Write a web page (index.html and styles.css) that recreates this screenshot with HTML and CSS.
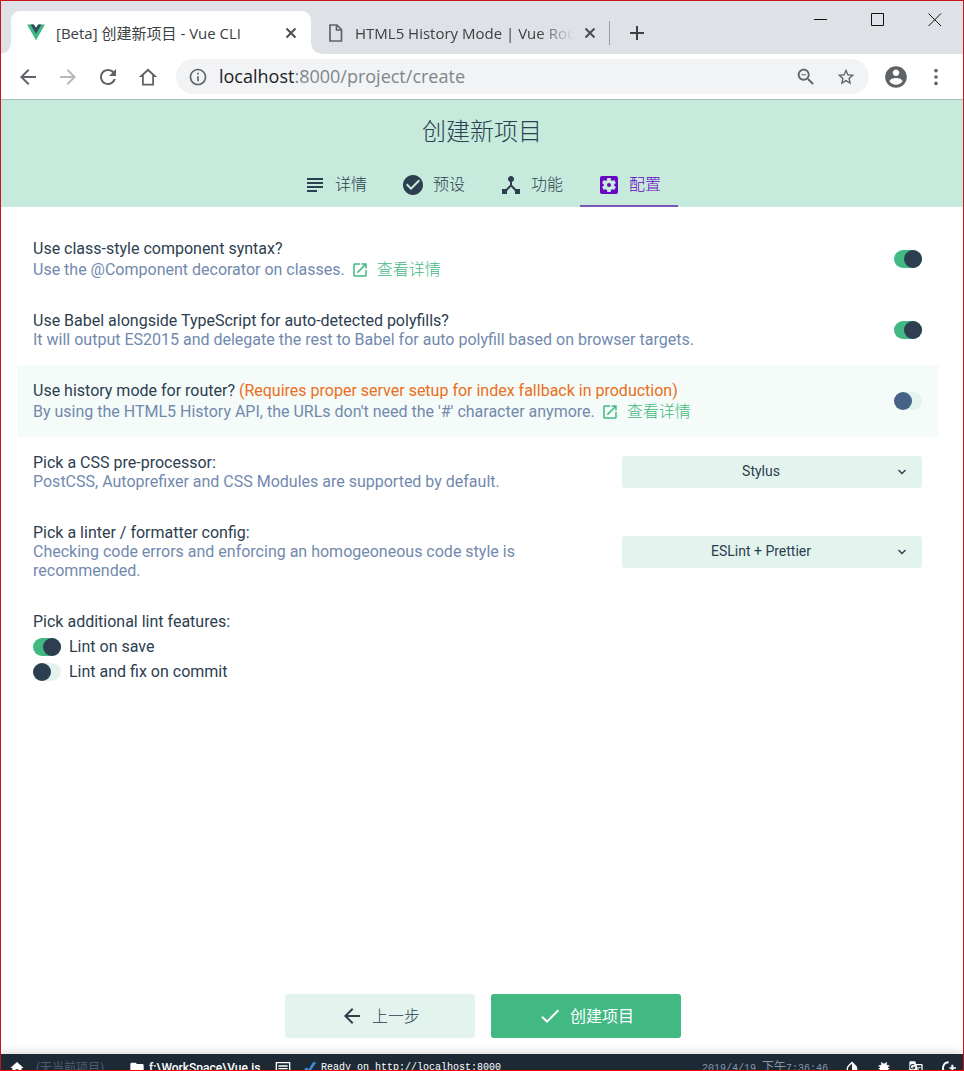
FILE: index.html
```html
<!DOCTYPE html>
<html lang="zh-CN">
<head>
<meta charset="utf-8">
<title>[Beta] 创建新项目 - Vue CLI</title>
<link rel="stylesheet" href="styles.css">
</head>
<body>
<div class="window">
  <div class="titlebar">
    <div class="tabs">
      <div class="tab tab-active">
        <svg class="favicon" viewBox="0 0 20 18"><path fill="#41b883" d="M0 0h7.600L10 4l2.400-4H20L10 17.500z"/><path fill="#35495e" d="M4 0h3.600L10 4l2.400-4H16l-6 10.400z"/></svg>
        <span class="tab-title">[Beta] 创建新项目 - Vue CLI</span>
        <button class="tab-close" type="button" aria-label="Close tab"><svg viewBox="0 0 12 12"><path d="M1.500 1.500l9 9m0-9l-9 9"/></svg></button>
      </div>
      <div class="tab">
        <svg class="favicon file" viewBox="0 0 18 20"><path d="M3 2h7l4.500 4.500V18H3zM9.500 2v5h5"/></svg>
        <span class="tab-title tab-title-fade">HTML5 History Mode | Vue Router</span>
        <button class="tab-close" type="button" aria-label="Close tab"><svg viewBox="0 0 12 12"><path d="M1.500 1.500l9 9m0-9l-9 9"/></svg></button>
      </div>
      <button class="new-tab" type="button" aria-label="New tab"><svg viewBox="0 0 16 16"><path d="M8 1v14M1 8h14"/></svg></button>
    </div>
    <div class="window-controls">
      <button type="button" aria-label="Minimize"><svg viewBox="0 0 14 14"><path d="M0 6.500h13"/></svg></button>
      <button type="button" aria-label="Maximize"><svg viewBox="0 0 14 14"><path d="M.5.5h12v12H.5z"/></svg></button>
      <button type="button" aria-label="Close"><svg viewBox="0 0 14 14"><path d="M.5.5l12.500 12.500m0-12.500l-12.500 12.500"/></svg></button>
    </div>
  </div>

  <div class="toolbar">
    <div class="nav-buttons">
      <button type="button" aria-label="Back"><svg viewBox="0 0 24 24"><path d="M20 11H7.830l5.590-5.590L12 4l-8 8 8 8 1.410-1.410L7.830 13H20v-2z"/></svg></button>
      <button type="button" class="muted" aria-label="Forward"><svg viewBox="0 0 24 24"><path d="M12 4l-1.410 1.410L16.170 11H4v2h12.170l-5.580 5.590L12 20l8-8z"/></svg></button>
      <button type="button" aria-label="Reload"><svg viewBox="0 0 24 24"><path d="M17.650 6.350C16.200 4.900 14.210 4 12 4c-4.420 0-7.990 3.580-7.990 8s3.570 8 7.990 8c3.730 0 6.840-2.550 7.730-6h-2.080c-.82 2.330-3.040 4-5.650 4-3.310 0-6-2.690-6-6s2.690-6 6-6c1.660 0 3.140.69 4.220 1.780L13 11h7V4l-2.350 2.350z"/></svg></button>
      <button type="button" aria-label="Home"><svg viewBox="0 0 24 24"><path d="M12 3.500L2.800 12H6v8.500h12V12h3.200zM12 6.200l4.200 3.900v8.600H7.800v-8.600z"/></svg></button>
    </div>
    <div class="address">
      <svg class="info" viewBox="0 0 24 24"><path d="M11 17h2v-6h-2v6zm1-15C6.480 2 2 6.480 2 12s4.480 10 10 10 10-4.480 10-10S17.520 2 12 2zm0 18c-4.410 0-8-3.590-8-8s3.590-8 8-8 8 3.590 8 8-3.590 8-8 8zM11 9h2V7h-2v2z"/></svg>
      <div class="url" role="textbox" aria-label="Address" contenteditable="true" spellcheck="false"><span class="url-host">localhost</span>:8000/project/create</div>
      <button type="button" aria-label="Zoom"><svg class="zoom" viewBox="0 0 24 24"><path d="M15.500 14h-.79l-.28-.27C15.410 12.590 16 11.110 16 9.500 16 5.910 13.090 3 9.500 3S3 5.910 3 9.500 5.910 16 9.500 16c1.610 0 3.090-.59 4.230-1.570l.27.28v.79l5 4.990L20.490 19l-4.990-5zm-6 0C7.010 14 5 11.990 5 9.500S7.010 5 9.500 5 14 7.010 14 9.500 11.990 14 9.500 14zM7 9h5v1H7z"/></svg></button>
      <button type="button" aria-label="Bookmark"><svg viewBox="0 0 24 24"><path d="M22 9.240l-7.190-.62L12 2 9.190 8.630 2 9.240l5.460 4.730L5.820 21 12 17.270 18.180 21l-1.630-7.030L22 9.240zM12 15.400l-3.760 2.270 1-4.280-3.320-2.880 4.380-.38L12 6.100l1.710 4.040 4.380.38-3.320 2.880 1 4.280L12 15.400z"/></svg></button>
    </div>
    <div class="profile-buttons">
      <button type="button" aria-label="Profile"><svg class="avatar" viewBox="0 0 24 24"><path d="M12 2C6.480 2 2 6.480 2 12s4.480 10 10 10 10-4.480 10-10S17.520 2 12 2zm0 3c1.660 0 3 1.340 3 3s-1.340 3-3 3-3-1.340-3-3 1.340-3 3-3zm0 14.200c-2.500 0-4.710-1.280-6-3.220.03-1.990 4-3.080 6-3.080 1.990 0 5.970 1.090 6 3.080-1.290 1.940-3.500 3.220-6 3.220z"/></svg></button>
      <button type="button" aria-label="Menu"><svg viewBox="0 0 24 24"><circle cx="12" cy="3.500" r="2.400"/><circle cx="12" cy="12" r="2.400"/><circle cx="12" cy="20.500" r="2.400"/></svg></button>
    </div>
  </div>

  <header class="page-header">
    <h1>创建新项目</h1>
    <nav class="steps">
      <a class="step" href="#details"><svg viewBox="0 0 24 24"><path d="M14 17H4v2h10v-2zm6-8H4v2h16V9zM4 15h16v-2H4v2zM4 5v2h16V5H4z"/></svg>详情</a>
      <a class="step" href="#presets"><svg viewBox="0 0 24 24"><path d="M12 2C6.480 2 2 6.480 2 12s4.480 10 10 10 10-4.480 10-10S17.520 2 12 2zm-2 15l-5-5 1.410-1.410L10 14.170l7.590-7.590L19 8l-9 9z"/></svg>预设</a>
      <a class="step" href="#features"><svg viewBox="0 0 24 24"><path d="M17 16l-4-4V8.820C14.160 8.400 15 7.300 15 6c0-1.660-1.340-3-3-3S9 4.340 9 6c0 1.300.84 2.400 2 2.820V12l-4 4H3v5h5v-3.050l4-4.200 4 4.200V21h5v-5h-4z"/></svg>功能</a>
      <a class="step step-active" href="#config" aria-current="step"><svg viewBox="0 0 24 24"><path d="M12 10c-1.100 0-2 .9-2 2s.9 2 2 2 2-.9 2-2-.9-2-2-2zm7-7H5c-1.110 0-2 .9-2 2v14c0 1.100.89 2 2 2h14c1.110 0 2-.9 2-2V5c0-1.100-.89-2-2-2zm-1.750 9c0 .23-.02.46-.05.68l1.480 1.160c.13.11.17.3.08.45l-1.400 2.420c-.09.15-.27.21-.43.15l-1.740-.7c-.36.28-.76.51-1.180.69l-.26 1.850c-.03.17-.18.3-.35.3h-2.800c-.17 0-.32-.13-.35-.29l-.26-1.850c-.43-.18-.82-.41-1.180-.69l-1.740.7c-.16.06-.34 0-.43-.15l-1.400-2.420c-.09-.15-.05-.34.08-.45l1.480-1.160c-.03-.23-.05-.46-.05-.69 0-.23.02-.46.05-.68l-1.480-1.160c-.13-.11-.17-.3-.08-.45l1.400-2.420c.09-.15.27-.21.43-.15l1.740.7c.36-.28.76-.51 1.180-.69l.26-1.850c.03-.17.18-.3.35-.3h2.800c.17 0 .32.13.35.29l.26 1.850c.43.18.82.41 1.180.69l1.740-.7c.16-.06.34 0 .43.15l1.400 2.420c.09.15.05.34-.08.45l-1.480 1.160c.03.23.05.46.05.69z"/></svg>配置</a>
    </nav>
  </header>

  <main class="config">
    <div class="row">
      <div class="row-text">
        <label for="class-style">Use class-style component syntax?</label>
        <div class="description has-link">Use the @Component decorator on classes.
          <a class="more" href="#class-style-info"><svg viewBox="0 0 24 24"><path d="M19 19H5V5h7V3H5c-1.110 0-2 .9-2 2v14c0 1.100.89 2 2 2h14c1.100 0 2-.9 2-2v-7h-2v7zM14 3v2h3.590l-9.830 9.830 1.410 1.410L19 6.410V10h2V3h-7z"/></svg>查看详情</a></div>
      </div>
      <input class="switch" id="class-style" type="checkbox" checked>
    </div>
    <div class="row">
      <div class="row-text">
        <label for="babel">Use Babel alongside TypeScript for auto-detected polyfills?</label>
        <div class="description">It will output ES2015 and delegate the rest to Babel for auto polyfill based on browser targets.</div>
      </div>
      <input class="switch" id="babel" type="checkbox" checked>
    </div>
    <div class="row row-hover">
      <div class="row-text">
        <label for="history">Use history mode for router? <span class="warning">(Requires proper server setup for index fallback in production)</span></label>
        <div class="description has-link">By using the HTML5 History API, the URLs don't need the '#' character anymore.
          <a class="more" href="#history-info"><svg viewBox="0 0 24 24"><path d="M19 19H5V5h7V3H5c-1.110 0-2 .9-2 2v14c0 1.100.89 2 2 2h14c1.100 0 2-.9 2-2v-7h-2v7zM14 3v2h3.590l-9.830 9.830 1.410 1.410L19 6.410V10h2V3h-7z"/></svg>查看详情</a></div>
      </div>
      <input class="switch" id="history" type="checkbox">
    </div>
    <div class="row">
      <div class="row-text">
        <label for="css">Pick a CSS pre-processor:</label>
        <div class="description">PostCSS, Autoprefixer and CSS Modules are supported by default.</div>
      </div>
      <div class="select-wrap">
        <select id="css"><option>Stylus</option></select>
        <svg viewBox="0 0 10 10"><path d="M1.500 3l3.500 3.500L8.500 3"/></svg>
      </div>
    </div>
    <div class="row">
      <div class="row-text">
        <label for="linter">Pick a linter / formatter config:</label>
        <div class="description">Checking code errors and enforcing an homogeoneous code style is recommended.</div>
      </div>
      <div class="select-wrap">
        <select id="linter"><option>ESLint + Prettier</option></select>
        <svg viewBox="0 0 10 10"><path d="M1.500 3l3.500 3.500L8.500 3"/></svg>
      </div>
    </div>
    <fieldset class="lint">
      <legend>Pick additional lint features:</legend>
      <label><input class="switch" type="checkbox" checked>Lint on save</label>
      <label><input class="switch" type="checkbox">Lint and fix on commit</label>
    </fieldset>
  </main>

  <div class="actions">
    <button class="action" type="button"><svg viewBox="0 0 24 24"><path d="M20 11H7.830l5.590-5.590L12 4l-8 8 8 8 1.410-1.410L7.830 13H20v-2z"/></svg>上一步</button>
    <button class="action action-primary" type="button"><svg viewBox="0 0 24 24"><path d="M9 16.200L4.800 12l-1.400 1.400L9 19 21 7l-1.400-1.400L9 16.200z"/></svg>创建项目</button>
  </div>

  <div class="status-clip">
    <footer class="status">
      <svg viewBox="0 0 24 24"><path d="M10 20v-6h4v6h5v-8h3L12 3 2 12h3v8z"/></svg>
      <span class="status-project">(无当前项目)</span>
      <svg viewBox="0 0 24 24"><path d="M10 4H4c-1.100 0-2 .9-2 2v12c0 1.100.9 2 2 2h16c1.100 0 2-.9 2-2V8c0-1.100-.9-2-2-2h-8l-2-2z"/></svg>
      <span class="status-path">f:\WorkSpace\Vue.js</span>
      <svg viewBox="0 0 24 24"><path d="M1 3h22v18H1zM3 5v14h18V5zM5 8h14v2H5zM5 12h14v2H5z" fill-rule="evenodd"/></svg>
      <svg class="status-check" viewBox="0 0 24 24"><path d="M17 2h6L10 21 2 14l4-3 4 3z"/></svg>
      <span class="status-log">Ready on http://localhost:8000</span>
      <span class="status-time">2019/4/19 <span class="meridiem">下午</span>7:36:46</span>
      <div class="status-tools">
        <svg viewBox="0 0 24 24"><path d="M17.660 7.930L12 2.270 6.340 7.930c-3.120 3.120-3.120 8.190 0 11.310a8 8 0 0 0 11.320 0c3.120-3.120 3.120-8.190 0-11.310zM12 19.590a6 6 0 0 1-4.240-10.240L12 5.100z"/></svg>
        <svg viewBox="0 0 24 24"><path d="M20 8h-2.810c-.45-.78-1.070-1.450-1.820-1.960L17 4.410 15.590 3l-2.170 2.170a6 6 0 0 0-2.830 0L8.410 3 7 4.410l1.620 1.630C7.880 6.550 7.260 7.220 6.810 8H4v2h2.090c-.05.33-.09.66-.09 1v1H4v2h2v1c0 .34.04.67.09 1H4v2h2.810a6 6 0 0 0 10.380 0H20v-2h-2.090c.05-.33.09-.66.09-1v-1h2v-2h-2v-1c0-.34-.04-.67-.09-1H20z"/></svg>
        <svg viewBox="0 0 24 24"><path d="M3 2h8l1 4h9l1 1v14l-1 1h-8l-1-4H3l-1-1V3zM13 8l3 12h4V8zM7 6a4 4 0 1 0 4 4H7v1.500h2A2.500 2.500 0 1 1 8.500 8L10 7a4 4 0 0 0-3-1zM14 11h5v1h-2l-2 5h-1l2-5h-2z" fill-rule="evenodd"/></svg>
        <svg viewBox="0 0 24 24"><path d="M13 2v3a7 7 0 0 0-5 12l-2 2A10 10 0 0 1 13 2zM17 7h3v4h4v2h-4v4h-3v-4h-3v-2h3z"/></svg>
      </div>
    </footer>
  </div>
</div>
</body>
</html>
```
FILE: styles.css
```css
* {
  box-sizing: border-box;
}

body {
  margin: 0;
  color: #2c3e50;
  font: 16px/19px Roboto, "Noto Sans CJK SC", sans-serif;
}

button {
  display: flex;
  align-items: center;
  justify-content: center;
  margin: 0;
  padding: 0;
  border: 0;
  background: none;
  color: inherit;
  font: inherit;
}

svg {
  flex: none;
  fill: currentColor;
}

a {
  text-decoration: none;
}

.window {
  display: flex;
  flex-direction: column;
  height: 100vh;
  overflow: hidden;
  border: 1px solid #c8141c;
  border-bottom-color: #f00;
  background: #fff;
}

/* Browser frame */
.titlebar {
  display: flex;
  flex: none;
  justify-content: space-between;
  height: 53px;
  background: #dee1e6;
  color: #3c4043;
  font: 15px/24px "Open Sans", "Noto Sans CJK SC", sans-serif;
}

.tabs {
  display: flex;
  align-items: center;
  padding: 10px 0 0 10px;
}

.tab {
  position: relative;
  display: flex;
  align-items: center;
  gap: 8px;
  width: 299px;
  height: 43px;
  padding: 0 12px 0 16px;
}

.tab:not(.tab-active)::after {
  content: "";
  position: absolute;
  right: 0;
  top: 10px;
  width: 1px;
  height: 24px;
  background: #9a9da1;
}

.tab-active {
  width: 300px;
  border-radius: 9px 9px 0 0;
  background: #fff;
}

.tab-active::before,
.tab-active::after {
  content: "";
  position: absolute;
  bottom: 0;
  width: 10px;
  height: 10px;
}

.tab-active::before {
  right: 100%;
  background: radial-gradient(circle at 0 0, #dee1e6 9px, #fff 10px);
}

.tab-active::after {
  left: 100%;
  background: radial-gradient(circle at 100% 0, #dee1e6 9px, #fff 10px);
}

.favicon {
  width: 18px;
  height: 17px;
}

.file {
  height: 20px;
  fill: none;
  stroke: #5f6368;
  stroke-width: 1.7;
}

.tab-title {
  flex: 1;
  padding-left: 3px;
  overflow: hidden;
  white-space: nowrap;
}

.tab-title-fade {
  padding-left: 2px;
  mask-image: linear-gradient(90deg, #000 calc(100% - 36px), transparent);
}

.tab-close svg {
  width: 12px;
  height: 12px;
  margin: 2px;
  stroke: #4b4e52;
  stroke-width: 2;
}

.new-tab {
  width: 54px;
}

.new-tab svg {
  width: 16px;
  height: 16px;
  stroke: #3c4043;
  stroke-width: 2;
}

.window-controls {
  display: flex;
}

.window-controls button {
  width: 57px;
  height: 38px;
}

.window-controls svg {
  width: 14px;
  height: 14px;
  fill: none;
  stroke: #111;
}

.toolbar {
  display: flex;
  flex: none;
  align-items: center;
  height: 46px;
  border-bottom: 1px solid #a5bdb3;
  color: #5f6368;
}

.nav-buttons {
  display: flex;
  padding: 0 8px 0 7px;
}

.toolbar button {
  width: 40px;
  height: 34px;
}

.toolbar svg {
  width: 24px;
  height: 24px;
}

.toolbar .muted {
  color: #b6b8bb;
}

.address {
  display: flex;
  flex: 1;
  align-items: center;
  height: 35px;
  padding: 0 3px 0 12px;
  border-radius: 18px;
  background: #f1f3f4;
}

.toolbar .info,
.address button svg {
  width: 20px;
  height: 20px;
}

.toolbar .zoom.zoom {
  width: 22px;
  height: 22px;
}

.url {
  flex: 1;
  padding: 0 0 2px 11px;
  color: #80868b;
  font: 18px/26px "Open Sans", sans-serif;
}

.url-host {
  color: #202124;
}

.profile-buttons {
  display: flex;
  padding: 0 7px;
}

.toolbar .avatar {
  width: 26px;
  height: 26px;
}

.profile-buttons button:last-child svg {
  width: 18px;
  height: 18px;
}

/* Project creation page */
.page-header {
  display: flex;
  flex: none;
  flex-direction: column;
  align-items: center;
  background: #c6ebdd;
}

.page-header h1 {
  margin: 16px 0;
  font-size: 24px;
  font-weight: 300;
  line-height: 32px;
}

.steps {
  display: flex;
}

.step {
  display: flex;
  align-items: center;
  gap: 8px;
  height: 43px;
  padding: 0 17px;
  border-bottom: 2px solid transparent;
  color: #2c3e50;
  font-weight: 300;
}

.step svg {
  width: 24px;
  height: 24px;
}

.step-active {
  border-bottom-color: #7d57b8;
  color: #6806c1;
}

.config {
  flex: 1;
  min-height: 0;
  padding: 16px 25px 16px 16px;
}

.row {
  display: flex;
  align-items: center;
  gap: 16px;
  padding: 16px;
}

.row-hover {
  background: #f4fbf8;
}

.row-text {
  flex: 1;
}

.row-text label {
  display: block;
}

.description {
  color: #7289ae;
}

.has-link {
  padding-top: 2px;
}

.more {
  display: inline-flex;
  align-items: center;
  gap: 8px;
  height: 19px;
  margin-left: 2px;
  color: #42b983;
  font-weight: 300;
  vertical-align: top;
}

.more svg {
  width: 18px;
  height: 18px;
}

.warning {
  color: #e96e20;
}

.switch {
  position: relative;
  flex: none;
  width: 28px;
  height: 18px;
  margin: 0;
  border-radius: 9px;
  background: #e2f4ed;
  appearance: none;
}

.switch::before {
  content: "";
  display: block;
  width: 18px;
  height: 18px;
  border-radius: 50%;
  background: #2c3e50;
}

.switch:checked {
  background: #42b983;
}

.switch:checked::before {
  margin-left: 10px;
}

.row-hover .switch::before {
  background: #466286;
}

.select-wrap {
  position: relative;
  flex: none;
  width: 300px;
}

.select-wrap select {
  width: 100%;
  height: 32px;
  padding: 0 38px 2px 16px;
  border: 0;
  border-radius: 3px;
  background: #e2f4ed;
  color: #2c3e50;
  font: 14px/20px Roboto, sans-serif;
  text-align: center;
  text-align-last: center;
  appearance: none;
}

.select-wrap svg {
  position: absolute;
  top: 11px;
  right: 15px;
  width: 10px;
  height: 10px;
  fill: none;
  stroke: #2c3e50;
  stroke-width: 1.4;
  pointer-events: none;
}

.lint {
  display: flex;
  flex-direction: column;
  gap: 6px;
  margin: 0;
  padding: 6px 16px 16px;
  border: 0;
}

.lint legend {
  padding: 16px 0 0;
}

.lint label {
  display: flex;
  align-items: center;
  gap: 8px;
}

.actions {
  display: flex;
  flex: none;
  justify-content: center;
  gap: 16px;
  padding: 16px 15px 16px 17px;
}

.action {
  gap: 8px;
  width: 190px;
  height: 44px;
  border-radius: 3px;
  background: #e2f4ed;
  font-weight: 300;
}

.action svg {
  width: 24px;
  height: 24px;
}

.action-primary {
  background: #42b983;
  color: #fff;
  font-weight: 400;
}

/* Status bar, cut off by the lower edge of the window */
.status-clip {
  flex: none;
  height: 16px;
  background: #1d2935;
  box-shadow: 0 -2px 10px rgba(0, 0, 0, .15);
}

.status {
  display: flex;
  align-items: center;
  height: 28px;
  padding-left: 8px;
  color: #fff;
  white-space: nowrap;
}

.status svg {
  width: 16px;
  height: 16px;
}

.status-project {
  width: 104px;
  padding-left: 11px;
  color: #4c5d70;
  font-size: 12px;
}

.status-path {
  width: 130px;
  padding-left: 4px;
  font-size: 12px;
  font-weight: 500;
}

.status svg.status-check {
  width: 14px;
  height: 14px;
  margin-left: 12px;
  color: #3f8fd8;
}

.status-log {
  flex: 1;
  padding-left: 4px;
  font: 10px/16px "Liberation Mono", monospace;
}

.status-time {
  color: #8797a8;
  font: 10px/16px "Liberation Mono", "Noto Sans CJK SC", monospace;
}

.meridiem {
  font-size: 12px;
}

.status-tools {
  display: flex;
  gap: 16px;
  padding: 0 7px 0 16px;
}
```
